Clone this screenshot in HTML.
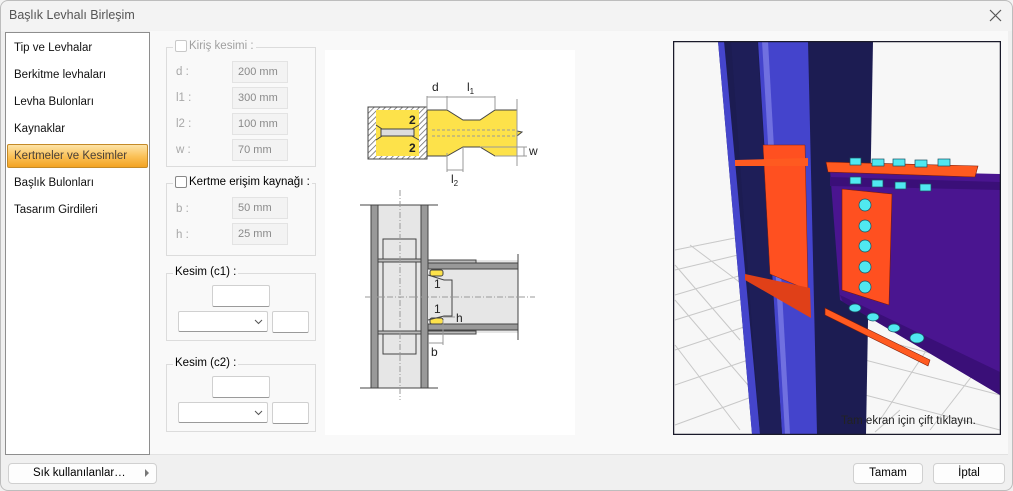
<!DOCTYPE html>
<html><head><meta charset="utf-8"><style>
*{margin:0;padding:0;box-sizing:border-box}
body{width:1013px;height:491px;overflow:hidden;background:#f0f0f0;font-family:"Liberation Sans",sans-serif;font-size:12px;color:#000;position:relative}
.a{position:absolute}
.win{left:0;top:0;width:1013px;height:491px;background:#f0f0f0;overflow:hidden}
.frame{left:0;top:0;width:1013px;height:491px;border:1px solid #bdbdbd;border-radius:8px;pointer-events:none}
.title{left:0;top:0;width:1013px;height:31px;background:#f3f3f3}
.content{left:150px;top:31px;width:858px;height:424px;background:#f9f9f9;border-bottom:1px solid #e2e2e2}
.list{left:5px;top:32px;width:145px;height:423px;background:#fff;border:1px solid #8e8e8e}
.item{position:absolute;left:8px;font-size:11.5px;color:#111}
.sel{left:1px;top:111px;width:141px;height:24px;border:1px solid #c48a28;border-radius:2px;background:linear-gradient(#fde3a8,#fbc25a 50%,#f3a323);}
.grp{border:1px solid #dcdcdc}
.lg{position:absolute;background:#f9f9f9;padding:0 2px;font-size:11.5px}
.lbl{color:#a8a8a8;font-size:11.5px}
.inp{background:#f3f3f3;border:1px solid #e3e3e3;color:#8a8a8a;font-size:11px;padding:4px 0 0 5px;height:22px;width:56px}
.wi{background:#fff;border:1px solid #d0d0d0;border-bottom:1px solid #9a9a9a;border-radius:2px}
.btn{background:#fdfdfd;border:1px solid #d0d0d0;border-radius:4px;font-size:11.5px;text-align:center;line-height:19px}
.cb{width:12px;height:12px;border:1px solid #888;border-radius:2px;background:#fff}
</style></head><body>
<div class="a win">
<div class="a title"></div>
<div class="a" style="left:9px;top:8px;font-size:12.5px;color:#555">Başlık Levhalı Birleşim</div>
<svg class="a" style="left:989px;top:9px" width="13" height="13"><path d="M1 1L12 12M12 1L1 12" stroke="#555" stroke-width="1.2"/></svg>
<div class="a content"></div>
<div class="a list">
<div class="item" style="top:9px">Tip ve Levhalar</div>
<div class="item" style="top:36px">Berkitme levhaları</div>
<div class="item" style="top:63px">Levha Bulonları</div>
<div class="item" style="top:90px">Kaynaklar</div>
<div class="a sel"></div>
<div class="item" style="top:117px;color:#4a4038">Kertmeler ve Kesimler</div>
<div class="item" style="top:144px">Başlık Bulonları</div>
<div class="item" style="top:171px">Tasarım Girdileri</div>
</div>

<div class="a grp" style="left:166px;top:47px;width:150px;height:120px"></div>
<div class="lg" style="left:173px;top:40px;color:#a0a0a0;display:flex;align-items:center"><span class="cb" style="border-color:#c8c8c8;margin-right:2px"></span>Kiriş kesimi :</div>
<div class="a lbl" style="left:176px;top:66px">d :</div><div class="a inp" style="left:232px;top:61px">200 mm</div>
<div class="a lbl" style="left:176px;top:92px">l1 :</div><div class="a inp" style="left:232px;top:87px">300 mm</div>
<div class="a lbl" style="left:176px;top:118px">l2 :</div><div class="a inp" style="left:232px;top:113px">100 mm</div>
<div class="a lbl" style="left:176px;top:144px">w :</div><div class="a inp" style="left:232px;top:139px">70 mm</div>

<div class="a grp" style="left:166px;top:183px;width:150px;height:73px"></div>
<div class="lg" style="left:173px;top:176px;display:flex;align-items:center"><span class="cb" style="margin-right:2px"></span>Kertme erişim kaynağı :</div>
<div class="a lbl" style="left:176px;top:203px">b :</div><div class="a inp" style="left:232px;top:197px">50 mm</div>
<div class="a lbl" style="left:176px;top:229px">h :</div><div class="a inp" style="left:232px;top:223px">25 mm</div>

<div class="a grp" style="left:166px;top:273px;width:150px;height:68px"></div>
<div class="lg" style="left:173px;top:266px">Kesim (c1) :</div>
<div class="a wi" style="left:212px;top:285px;width:58px;height:22px"></div>
<div class="a wi" style="left:178px;top:311px;width:90px;height:21px"></div>
<svg class="a" style="left:254px;top:319px" width="9" height="6"><path d="M1 1L4.5 4.5L8 1" stroke="#555" fill="none"/></svg>
<div class="a wi" style="left:272px;top:311px;width:37px;height:22px"></div>

<div class="a grp" style="left:166px;top:364px;width:150px;height:68px"></div>
<div class="lg" style="left:173px;top:357px">Kesim (c2) :</div>
<div class="a wi" style="left:212px;top:376px;width:58px;height:22px"></div>
<div class="a wi" style="left:178px;top:402px;width:90px;height:21px"></div>
<svg class="a" style="left:254px;top:410px" width="9" height="6"><path d="M1 1L4.5 4.5L8 1" stroke="#555" fill="none"/></svg>
<div class="a wi" style="left:272px;top:402px;width:37px;height:22px"></div>

<svg class="a" style="left:325px;top:50px" width="250" height="385" viewBox="325 50 250 385">
<defs><pattern id="h" width="4" height="4" patternUnits="userSpaceOnUse" patternTransform="rotate(45)"><rect width="4" height="4" fill="#fff"/><line x1="0" y1="0" x2="0" y2="4" stroke="#666" stroke-width="1.5"/></pattern></defs>
<rect x="325" y="50" width="250" height="385" fill="#fff"/>
<rect x="368" y="107" width="59" height="52" fill="url(#h)" stroke="#444"/>
<rect x="376" y="110" width="43" height="46" fill="#fde24a"/>
<path d="M376 125 L382 129 L412 129 L419 125 M376 140 L382 136 L412 136 L419 140" stroke="#444" fill="none"/>
<rect x="381" y="129" width="33" height="7" fill="#ddd" stroke="#444"/>
<text x="409" y="124" font-size="12" font-weight="bold" fill="#222">2</text>
<text x="409" y="152" font-size="12" font-weight="bold" fill="#222">2</text>
<path d="M427 110 L447 110 L463 120 L480 120 L495 110 L517 110 L517 131 L522 132 L517 136 L517 156 L495 156 L480 147 L463 147 L447 156 L427 156Z" fill="#fde24a" stroke="#444"/>
<path d="M432 130 H517 M432 136 H517" stroke="#999" stroke-dasharray="3 2"/>
<path d="M517 99 V166 M427 96 V110 M447 96 V110 M495 96 V110 M427 97 H495 M447 153 V172 M463 147 V172 M447 170 H463 M480 147 H527 M495 156 H527 M524 147 V156" stroke="#999" fill="none"/>
<text x="432" y="91" font-size="12" fill="#222">d</text>
<text x="467" y="91" font-size="12" fill="#222">l<tspan font-size="8" dy="3">1</tspan></text>
<text x="451" y="183" font-size="12" fill="#222">l<tspan font-size="8" dy="3">2</tspan></text>
<text x="529" y="155" font-size="12" fill="#222">w</text>
<rect x="371" y="205" width="57" height="183" fill="#e6e6e6"/>
<rect x="371" y="205" width="7" height="183" fill="#999" stroke="#444"/>
<rect x="421" y="205" width="7" height="183" fill="#999" stroke="#444"/>
<path d="M360 205 H438 M360 388 H438" stroke="#444"/>
<rect x="383" y="239" width="33" height="115" fill="none" stroke="#444"/>
<rect x="378" y="259" width="43" height="3" fill="#bbb" stroke="#444"/>
<rect x="378" y="331" width="43" height="3" fill="#bbb" stroke="#444"/>
<rect x="428" y="260" width="90" height="73" fill="#e6e6e6"/>
<rect x="428" y="260" width="48" height="3" fill="#bbb" stroke="#444"/>
<rect x="428" y="331" width="48" height="3" fill="#bbb" stroke="#444"/>
<rect x="428" y="263" width="90" height="6" fill="#999" stroke="#444"/>
<rect x="428" y="324" width="90" height="6" fill="#999" stroke="#444"/>
<rect x="430" y="270" width="13" height="6" fill="#fde24a" stroke="#444" rx="2"/>
<rect x="430" y="318" width="13" height="6" fill="#fde24a" stroke="#444" rx="2"/>
<path d="M428 275 L444 280 L452 280 L452 316 L444 316 L428 320" stroke="#444" fill="none"/>
<path d="M518 254 V340" stroke="#444"/>
<path d="M365 297 H535 M400 190 V400" stroke="#999" stroke-dasharray="6 2 1 2"/>
<text x="434" y="288" font-size="12" fill="#222">1</text>
<text x="434" y="313" font-size="12" fill="#222">1</text>
<text x="456" y="322" font-size="12" fill="#222">h</text>
<text x="431" y="356" font-size="12" fill="#222">b</text>
<path d="M428 343 H443 M443 320 V345 M443 317 H455" stroke="#999"/>
</svg>

<svg class="a" style="left:673px;top:41px" width="328" height="394" viewBox="673 41 328 394">
<rect x="673" y="41" width="328" height="394" fill="#f7f7f7"/>
<g stroke="#c8c8c8" fill="none">
<path d="M675 250 L735 238 M675 270 L738 255 M675 295 L742 275 M675 320 L746 298 M675 350 L750 325 M675 385 L754 358 M675 425 L757 395 M690 245 L750 290 M675 265 L740 340 M675 300 L748 385 M675 345 L740 430"/>
<path d="M865 360 L1000 395 M865 395 L1000 430 M900 345 L1000 372 M880 420 L960 300 M930 430 L1000 340 M875 432 L900 410"/>
</g>
<polygon points="718,41 873,41 866,434 752,434" fill="#1c1c52"/>
<polygon points="718,41 724,41 760,434 752,434" fill="#4545cc"/>
<polygon points="758,41 808,41 817,434 782,434" fill="#4444cc"/>
<polygon points="762,41 768,41 790,434 785,434" fill="#7070e0"/>
<polygon points="731,41 757,41 782,434 760,434" fill="#1e1e58"/>
<polygon points="763,145 805,145 808,290 770,274" fill="#ff5020" stroke="#802010" stroke-width="0.5"/>
<polygon points="735,160 808,158 808,166 735,166" fill="#ff5a20"/>
<polygon points="745,274 810,288 811,318 745,280" fill="#e04018"/>
<polygon points="830,170 1000,174 1000,395 840,300" fill="#4a1590"/>
<polygon points="830,177 1000,182 1000,190 830,186" fill="#3a0f78"/>
<polygon points="840,295 1000,372 1000,395 843,302" fill="#3a0f78"/>
<polygon points="826,162 978,166 975,177 828,172" fill="#ff5a20" stroke="#7a1a08" stroke-width="0.6"/>
<polygon points="842,189 892,194 889,305 842,290" fill="#ff5020" stroke="#7a1a08" stroke-width="0.6"/>
<polygon points="825,308 930,360 928,366 825,315" fill="#ff5a20" stroke="#7a1a08" stroke-width="0.6"/>
<g fill="#50e8f0" stroke="#1a5060" stroke-width="0.7">
<rect x="850" y="158" width="11" height="7"/><rect x="872" y="159" width="12" height="7"/><rect x="893" y="159" width="12" height="7"/><rect x="915" y="160" width="12" height="7"/><rect x="938" y="159" width="12" height="7"/>
<rect x="850" y="177" width="11" height="7"/><rect x="872" y="180" width="11" height="7"/><rect x="895" y="182" width="11" height="7"/><rect x="920" y="184" width="11" height="7"/>
<circle cx="865" cy="205" r="6"/><circle cx="865" cy="226" r="6"/><circle cx="865" cy="246" r="6"/><circle cx="865" cy="267" r="6"/><circle cx="865" cy="287" r="6"/>
<ellipse cx="855" cy="308" rx="6" ry="4"/><ellipse cx="873" cy="317" rx="6" ry="4"/><ellipse cx="894" cy="328" rx="6" ry="4"/><ellipse cx="917" cy="338" rx="7" ry="5"/>
</g>
<rect x="673.5" y="41.5" width="327" height="393" fill="none" stroke="#1a1a2a" stroke-width="1.5"/>
<text x="841" y="424" font-size="11.5" fill="#222">Tam ekran için çift tıklayın.</text>
</svg>

<div class="a btn" style="left:8px;top:463px;width:149px;height:21px;text-align:left;padding-left:24px">Sık kullanılanlar…</div>
<svg class="a" style="left:145px;top:469px" width="5" height="8"><path d="M0 0L4 4L0 8Z" fill="#777"/></svg>
<div class="a btn" style="left:853px;top:463px;width:70px;height:21px">Tamam</div>
<div class="a btn" style="left:933px;top:463px;width:72px;height:21px">İptal</div>
<div class="a frame"></div>
</div>
</body></html>
